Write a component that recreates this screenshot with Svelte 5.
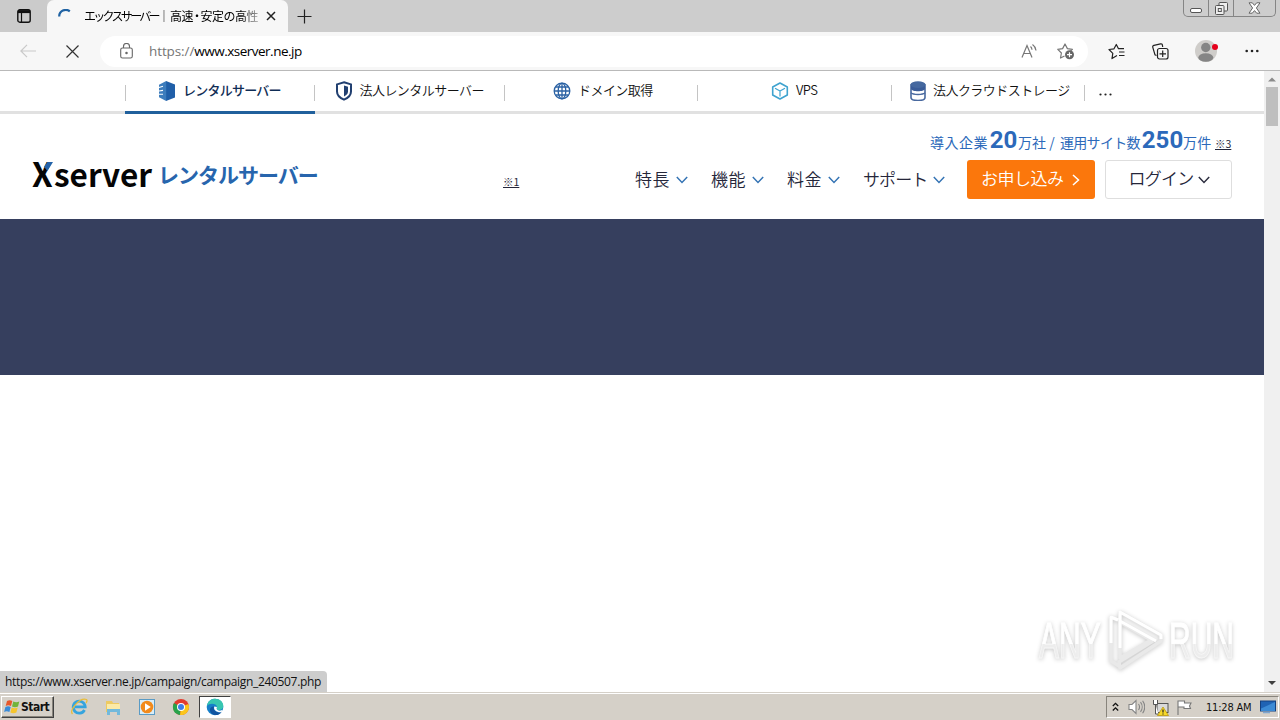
<script>
	const services = [
		{ id: 'rental', label: 'レンタルサーバー', width: 190, textWidth: 99, active: true },
		{ id: 'business', label: '法人レンタルサーバー', width: 190, textWidth: 124 },
		{ id: 'domain', label: 'ドメイン取得', width: 193, textWidth: 70 },
		{ id: 'vps', label: 'VPS', width: 194, textWidth: 21 },
		{ id: 'storage', label: '法人クラウドストレージ', width: 193, textWidth: 132 }
	];

	const menu = ['特長', '機能', '料金', 'サポート'];
</script>

{#snippet chevron(color)}
	<svg class="chevron" width="12" height="8" viewBox="0 0 12 8" fill="none" stroke={color} stroke-width="1.5"><polyline points="0.8 1 6 6.4 11.2 1"/></svg>
{/snippet}

{#snippet serviceIcon(id)}
	{#if id === 'rental'}
		<svg width="18" height="20" viewBox="0 0 18 20"><path d="M8 0l9 3.5v13L8 20z" fill="#205fa8"/><path d="M8.2 0L1 3.8v12.4L8.2 20z" fill="#3d7dbd"/><path d="M1 6.5l4-1.2M1 10l4-.6M1 13.3h4" stroke="#fff" stroke-width="1.1"/></svg>
	{:else if id === 'business'}
		<svg width="18" height="20" viewBox="0 0 18 20"><path d="M9 1.2l7 2.2v7c0 4-3.4 6.7-7 8.3-3.6-1.6-7-4.3-7-8.3v-7z" fill="#fff" stroke="#213f70" stroke-width="2"/><path d="M9 4.5l4 1.3v5c0 2-2 3.7-4 4.8z" fill="#213f70"/></svg>
	{:else if id === 'domain'}
		<svg width="18" height="18" viewBox="0 0 18 18" fill="none" stroke="#2b62a4" stroke-width="1.3"><circle cx="9" cy="9" r="7.8"/><ellipse cx="9" cy="9" rx="3.8" ry="7.8"/><path d="M9 1v16M1 9h16M2.5 5h13M2.5 13h13"/></svg>
	{:else if id === 'vps'}
		<svg width="18" height="18" viewBox="0 0 18 18" fill="none" stroke="#3fa3cf" stroke-width="1.6" stroke-linejoin="round"><path d="M9 1l7.300 4v8L9 17l-7.300-4V5z"/><path d="M4 6.300L9 9l5-2.700M9 9v5.500" stroke-width="1.2"/></svg>
	{:else}
		<svg width="16" height="20" viewBox="0 0 16 20"><path d="M1 4v12.500c0 4 14 4 14 0V4z" fill="#fff" stroke="#49699f" stroke-width="1.6"/><path d="M1 4v4c1 3 13 3 14 0V4z" fill="#3a5c98"/><ellipse cx="8" cy="3.6" rx="7.5" ry="3.3" fill="#45689f"/><path d="M1 11.800c2 2.300 12 2.300 14 0" fill="none" stroke="#49699f" stroke-width="1.5"/></svg>
	{/if}
{/snippet}

<div class="screen">
	<div class="tabstrip">
		<button class="tab-menu" aria-label="Tab actions">
			<svg width="14" height="14" viewBox="0 0 14 14" fill="none" stroke="#111"><rect x=".8" y=".8" width="12.4" height="12.4" rx="2" stroke-width="1.4"/><path d="M1 2.600h12" stroke-width="3"/><path d="M4.500 4v9" stroke-width="1.2"/></svg>
		</button>
		<div class="tab">
			<svg class="spinner" width="14" height="14" viewBox="0 0 14 14" fill="none" stroke="#1f62a3" stroke-width="2.2"><path d="M1.200 7.500A6.500 6.500 0 0 1 11.800 2.400"/></svg>
			<span class="tab-title"><span class="kana">エックスサーバー</span><span>｜</span><span class="kanji">高速<span class="dot">・</span>安定の高性</span></span>
			<svg width="10" height="10" viewBox="0 0 10 10" stroke="#222" stroke-width="1.5"><path d="M1 1l8 8M9 1l-8 8"/></svg>
		</div>
		<button class="new-tab" aria-label="New tab">
			<svg width="15" height="15" viewBox="0 0 15 15" stroke="#222" stroke-width="1.2"><path d="M7.500 .5v14M.5 7.500h14"/></svg>
		</button>
		<div class="window-buttons">
			<span class="wb">
				<svg width="12" height="5" viewBox="0 0 12 5"><rect x=".5" y=".5" width="11" height="4" rx="1.5" fill="#fff" stroke="#555"/></svg>
			</span>
			<span class="wb">
				<svg width="13" height="13" viewBox="0 0 13 13" fill="#eee" stroke="#555"><rect x="4" y=".5" width="8.5" height="8.5" rx="1"/><rect x=".5" y="3.5" width="8.5" height="9" rx="1"/><rect x="3.3" y="6.5" width="3" height="3"/></svg>
			</span>
			<span class="wb wide">
				<svg width="13" height="12" viewBox="0 0 13 12" fill="#fff" stroke="#666"><path d="M1 .8h3.300l2.200 2.600L8.700 .8H12L8.400 6l3.600 5.200H8.700L6.500 8.600l-2.200 2.600H1L4.600 6z"/></svg>
			</span>
		</div>
	</div>

	<div class="toolbar">
		<svg class="back" width="16" height="14" viewBox="0 0 16 14" fill="none" stroke="#c9c9c9" stroke-width="1.2"><path d="M7 .8L.9 7 7 13.200M1 7h15"/></svg>
		<svg class="stop" width="13" height="13" viewBox="0 0 13 13" stroke="#333" stroke-width="1.2"><path d="M.5 .5l12 12M12.500 .5l-12 12"/></svg>
		<div class="address">
			<svg width="13" height="16" viewBox="0 0 13 16" fill="none" stroke="#666" stroke-width="1.1"><rect x=".7" y="5" width="11.6" height="10" rx="1.8"/><path d="M3.500 5V3.500a3 3 0 0 1 6 0V5"/><circle cx="6.5" cy="10" r=".7" fill="#555"/></svg>
			<span class="url"><span class="scheme">https://</span>www.xserver.ne.jp</span>
			<svg class="read" width="17" height="16" viewBox="0 0 17 16" fill="none" stroke="#777" stroke-width="1.2"><path d="M1 14.500L6 2.500l5 12M2.800 10.500h6.500M9.500 3.500c1 .8 1.400 2 1.500 3.300M11.500 1.500c2 1.400 3.200 3.500 3.500 6"/></svg>
			<svg class="fav" width="18" height="18" viewBox="0 0 18 18" fill="none" stroke="#777" stroke-width="1.2" stroke-linejoin="round"><path d="M7.500 14L3.500 16l.9-5L.8 7.300l4.800-.7L8 2l2.400 4.600 5 .7-1.900 1.800"/><circle cx="12.5" cy="12.7" r="4.5" fill="#666" stroke="none"/><path d="M12.500 10.200v5M10 12.700h5" stroke="#fff"/></svg>
		</div>
		<svg class="favorites" width="17" height="17" viewBox="0 0 17 17" fill="none" stroke="#222" stroke-width="1.2" stroke-linejoin="round"><path d="M9 12.500L4 15.600l.8-5.300L1 6.500l5-.7L8.300 1.500l2.200 4.200h5.500M11 9h5.500M11 12.500h5.500"/></svg>
		<svg class="collections" width="17" height="17" viewBox="0 0 17 17" fill="none" stroke="#222" stroke-width="1.2"><path d="M4.500 12.500L3 11.800 .8 4.300c-.3-1 .2-1.800 1.200-2L8.500 .9c1-.2 1.700.3 1.900 1.300l.3 1.800"/><rect x="5.5" y="5.5" width="10.5" height="10.5" rx="2"/><path d="M10.700 7.500v6.500M7.500 10.800h6.500"/></svg>
		<svg class="profile" width="24" height="24" viewBox="0 0 24 24"><circle cx="11" cy="12" r="11" fill="#cfcdca"/><circle cx="10.8" cy="8.5" r="4.7" fill="#858585"/><ellipse cx="10.8" cy="18.5" rx="7.5" ry="4.3" fill="#858585"/><circle cx="20" cy="8" r="3" fill="#e5001c"/></svg>
		<svg class="more" width="14" height="4" viewBox="0 0 14 4" fill="#222"><circle cx="1.7" cy="2" r="1.3"/><circle cx="7" cy="2" r="1.3"/><circle cx="12.3" cy="2" r="1.3"/></svg>
	</div>

	<div class="viewport">
		<main class="page">
			<nav class="services">
				{#each services as s}
					<a href="#{s.id}" class="service" class:active={s.active} style="width: {s.width}px">
						{@render serviceIcon(s.id)}
						<span class="service-label" style="width: {s.textWidth}px">{s.label}</span>
					</a>
				{/each}
				<span class="service-more">
					<svg width="13" height="3" viewBox="0 0 13 3" fill="#222"><circle cx="1.5" cy="1.5" r="1.1"/><circle cx="6.5" cy="1.5" r="1.1"/><circle cx="11.5" cy="1.5" r="1.1"/></svg>
				</span>
			</nav>

			<header class="header">
				<div class="logo">
					<span class="logo-x">X<svg width="11" height="9" viewBox="0 0 11 9"><path d="M5.300 0H11L5.400 9 2 4.800z" fill="#2563a9"/></svg></span><span class="logo-name">server</span>
					<span class="logo-sub">レンタルサーバー</span>
				</div>
				<span class="note note-1">※1</span>
				<div class="header-right">
					<div class="stats">
						<span class="stat-a">導入企業</span><b>20</b><span class="stat-b">万社 /</span><span class="stat-c">運用サイト数</span><b class="big">250</b><span class="stat-d">万件</span><span class="note">※3</span>
					</div>
					<div class="actions">
						{#each menu as item}
							<a href="#menu" class="menu-item" class:long={item.length > 2}><span>{item}</span>{@render chevron('#3473b4')}</a>
						{/each}
						<button class="apply">
							<span>お申し込み</span>
							<svg width="8" height="12" viewBox="0 0 8 12" fill="none" stroke="#fff" stroke-width="1.5"><polyline points="1 1 6.500 6 1 11"/></svg>
						</button>
						<button class="login"><span>ログイン</span>{@render chevron('#2c2d3f')}</button>
					</div>
				</div>
			</header>

			<div class="hero"></div>
		</main>

		<div class="scrollbar">
			<svg width="16" height="15" viewBox="0 0 16 15"><path d="M4 10.500L8 6.500l4 4z" fill="#8b8b8b"/></svg>
			<div class="thumb"></div>
			<svg class="down" width="16" height="17" viewBox="0 0 16 17"><path d="M4 6l4 4 4-4z" fill="#404040"/></svg>
		</div>

		<div class="status">https://www.xserver.ne.jp/campaign/campaign_240507.php</div>

		<div class="watermark">
			<span class="wm-any">ANY</span>
			<svg width="60" height="66" viewBox="0 0 60 66" fill="none" stroke-linejoin="round"><path d="M13 12L6 9v44l8 5M15 4l41 23v6L15 60l-1-6 34-21M15 4v46l31-18L15 14" stroke="#e9e9e9" stroke-width="3.5"/><path d="M13 12L6 9v26M15 40V4l41 23v4M15 13l36 20" stroke="#fff" stroke-width="3"/></svg>
			<span class="wm-run">RUN</span>
		</div>
	</div>

	<div class="taskbar">
		<button class="start">
			<svg width="17" height="16" viewBox="0 0 17 16"><path d="M3 2c2-1 3.500-1 5.300 0L7 7c-2-1-3.500-1-5.300 0z" fill="#e8582a"/><path d="M9.300 2.500c2 1 4 1 6 0L14 7.600c-2 1-4 1-6 0z" fill="#72b43a"/><path d="M1.400 8c2-1 3.500-1 5.300 0l-1.300 5c-2-1-3.500-1-5.300 0z" fill="#3a8bd8"/><path d="M7.700 8.600c2 1 4 1 6 0l-1.300 5c-2 1-4 1-6 0z" fill="#f6c52e"/></svg>
			<span>Start</span>
		</button>
		<div class="quick">
			<svg width="18" height="18" viewBox="0 0 18 18" fill="none"><path d="M14.500 12a6 6 0 1 1 .7-3.200H5" stroke="#35a4de" stroke-width="2.8"/><path d="M2.500 16C-1 12 10-1 16.500 1.500c1 .8.300 2.500-.5 3.500" stroke="#e9bd38" stroke-width="1.3"/></svg>
			<svg width="18" height="18" viewBox="0 0 18 18"><path d="M2 3h6l1 2h6v9H2z" fill="#edca62"/><path d="M3 6h13v6H3z" fill="#fbeaa7"/><path d="M3 11h13v6h-3v-3H6v3H3z" fill="#72b9dc"/></svg>
			<svg width="18" height="18" viewBox="0 0 18 18"><rect x="1.5" y="1.5" width="15" height="15" fill="#d9edf8" stroke="#5a9bc5"/><circle cx="9" cy="9" r="6.3" fill="#f28a1b"/><path d="M7 5.200v7.600L12.800 9z" fill="#fff"/></svg>
			<svg width="18" height="18" viewBox="0 0 18 18"><circle cx="9" cy="9" r="8" fill="#e33b2e"/><path d="M9 9L2 5a8 8 0 0 0 6 12z" fill="#28a34b"/><path d="M9 9l7.400-3A8 8 0 0 1 8 17z" fill="#fbc61b"/><circle cx="9" cy="9" r="4" fill="#fff"/><circle cx="9" cy="9" r="3" fill="#3f7ee8"/></svg>
		</div>
		<div class="task-active">
			<svg width="18" height="18" viewBox="0 0 18 18"><circle cx="9" cy="9" r="8.3" fill="#167fc9"/><path d="M.8 8C2 3 5 .7 9 .7c5 0 8.300 3.300 8.300 7 0 3-2.300 4.300-4.500 4.300-3 0-1.600-1.500-1.800-3C10.500 5.500 4 4.500.8 8z" fill="#38c6b0"/><path d="M8 8.500c-1 3 1 6.500 7.500 5.700-4 4.800-11 3-11.500-2C3.800 9.500 6 8 8 8.500z" fill="#1254a0"/><path d="M11 9c-.5 1.200-1 2.500 1.500 3.500 1.500.4 3.300 0 4.300-.7l-1.300 2.400C11 14.800 7 12 8.300 8.500z" fill="#fff"/></svg>
		</div>
		<div class="tray">
			<svg class="tray-up" width="7" height="10" viewBox="0 0 7 10" fill="none" stroke="#111" stroke-width="1.3"><path d="M.8 4l2.700-2.700L6.200 4M.8 8.500l2.700-2.700 2.700 2.700"/></svg>
			<svg width="17" height="16" viewBox="0 0 17 16" fill="none" stroke="#858585" stroke-width="1.1"><path d="M1 5.500h3l4-4v13l-4-4H1z" fill="#fff"/><path d="M10.500 5c1.200 1.700 1.200 4.300 0 6M12.500 3.200c2.200 2.800 2.200 6.800 0 9.600M14.600 1.700c2.600 3.800 2.600 8.800 0 12.600"/></svg>
			<svg width="17" height="17" viewBox="0 0 17 17"><rect x="5" y="4.5" width="11" height="9" fill="#d9d9d9" stroke="#555"/><path d="M1.500 1v4.500h4V1M3.500 5.500V15h3" fill="#fff" stroke="#555"/><path d="M11 8l5.500 8.500h-11z" fill="#f7d92a" stroke="#b59000" stroke-width=".7"/><path d="M11 10.500v3M11 14.500v1" stroke="#222" stroke-width="1.2"/></svg>
			<svg width="17" height="17" viewBox="0 0 17 17" fill="#fff" stroke="#777" stroke-width="1.1"><path d="M2 1.500v14.500M2 2h6.500v2H15l-1.500 3 1 2.500H8V8H2z"/></svg>
			<span class="clock">11:28 AM</span>
			<svg width="16" height="14" viewBox="0 0 16 14"><rect x=".5" y="1" width="15" height="10" fill="#1f63b4" stroke="#14407e"/><path d="M1 8.500L15 2v9H1z" fill="#3c8bd5"/><path d="M3 12.500h7" stroke="#7ea6d0" stroke-width="1.5"/></svg>
		</div>
	</div>
</div>

<style>
	:global(body) { margin: 0; overflow: hidden; background: #fff; }

	.screen {
		width: 1280px; height: 720px; box-sizing: border-box;
		display: flex; flex-direction: column; overflow: hidden;
		font-family: "Open Sans", "Noto Sans CJK JP", sans-serif;
		color: #111;
	}
	.screen svg { flex: none; display: block; }
	button { border: none; background: none; padding: 0; margin: 0; font-family: inherit; color: inherit; }
	a { color: inherit; text-decoration: none; }

	.tabstrip { height: 32px; display: flex; background: #cdcdcd; flex: none; }
	.tab-menu { width: 47px; display: flex; align-items: center; padding-left: 17px; box-sizing: border-box; background: #cbcbcb; }
	.tab {
		width: 241px; box-sizing: border-box; padding: 0 12px 0 11px;
		display: flex; align-items: center; background: #f7f7f7;
		border-radius: 7px 7px 0 0;
	}
	.tab-title {
		width: 174px; margin: 0 8px 0 12px; display: flex; white-space: nowrap;
		font-size: 12px; color: #000;
		mask-image: linear-gradient(90deg, #000 90%, rgba(0, 0, 0, 0.35));
	}
	.kana { width: 74px; letter-spacing: -2.7px; }
	.kanji { letter-spacing: -0.5px; }
	.dot { margin: 0 -2px; }
	.new-tab { width: 32px; display: flex; align-items: center; justify-content: center; }
	.window-buttons {
		margin-left: auto; margin-right: 4px; height: 16px; display: flex;
		border: 1px solid #858585; border-top: none; border-radius: 0 0 5px 5px;
	}
	.wb { width: 24px; display: flex; align-items: center; justify-content: center; border-right: 1px solid #858585; }
	.wb:first-child svg { margin-top: 5px; }
	.wb.wide { width: 41px; border-right: none; }

	.toolbar {
		height: 39px; box-sizing: border-box; flex: none; display: flex; align-items: center;
		background: #f7f7f7; border-bottom: 1px solid #b9b9b9;
	}
	.back { margin-left: 20px; }
	.stop { margin-left: 30px; }
	.address {
		width: 988px; height: 31px; margin-left: 21px; padding: 0 13px 0 20px; box-sizing: border-box;
		display: flex; align-items: center; background: #fff; border-radius: 16px;
	}
	.url { margin-left: 16px; font-size: 13.5px; letter-spacing: -0.5px; color: #000; }
	.scheme { color: #757575; letter-spacing: -0.1px; }
	.read { margin-left: auto; }
	.fav { margin-left: 19px; }
	.favorites { margin-left: 20px; }
	.collections { margin-left: 27px; }
	.profile { margin-left: 26px; }
	.more { margin-left: 26px; }

	.viewport { position: relative; flex: 1; display: flex; min-height: 0; }
	.page { width: 1264px; background: #fff; font-family: "Noto Sans CJK JP", sans-serif; }

	.services { height: 43px; box-sizing: border-box; display: flex; padding-left: 125px; border-bottom: 3px solid #e1e1e1; }
	.service {
		height: 43px; box-sizing: border-box; padding-bottom: 3px; flex: none;
		display: flex; align-items: center; justify-content: center; gap: 7px;
		font-size: 13px; font-weight: 350; letter-spacing: -0.55px; color: #111;
		background: linear-gradient(#c4c4c4, #c4c4c4) 0 14px / 1px 16px no-repeat;
	}
	.service-label { white-space: nowrap; line-height: 20px; padding-bottom: 3px; }
	.service.active { margin-right: -1px; font-weight: 500; letter-spacing: -0.75px; color: #0f2d55; border-bottom: 3px solid #20609c; padding-bottom: 0; }
	.service-more {
		padding: 22px 0 0 15px;
		background: linear-gradient(#c4c4c4, #c4c4c4) 0 14px / 1px 16px no-repeat;
	}

	.header { height: 105px; box-sizing: border-box; display: flex; padding: 0 32px; }
	.logo { width: 471px; height: 60px; margin-top: 30px; display: flex; align-items: center; white-space: nowrap; }
	.logo-x, .logo-name { font-weight: 700; line-height: 58px; padding-bottom: 2px; color: #050505; }
	.logo-x { position: relative; width: 22px; font-size: 33px; }
	.logo-x svg { position: absolute; left: 10px; top: 18px; }
	.logo-name { width: 99px; font-size: 31.5px; }
	.logo-sub { margin-left: 5px; font-size: 21px; font-weight: 700; letter-spacing: -1px; color: #2765ad; }

	.note { font-size: 10.5px; line-height: 11px; text-decoration: underline; color: #25263a; white-space: nowrap; }
	.note-1 { margin-top: 62px; }
	.header-right { margin-left: auto; display: flex; flex-direction: column; align-items: flex-end; }
	.stats { height: 26px; margin-top: 12px; display: flex; align-items: baseline; white-space: nowrap; font-size: 14px; line-height: 26px; color: #2c69ba; }
	.stats b { width: 29px; font-family: Roboto, sans-serif; font-size: 24px; line-height: 28px; text-align: center; }
	.stats b.big { width: 43px; padding-left: 1px; margin-right: -1px; }
	.stat-a { width: 59px; letter-spacing: 0.5px; }
	.stat-b { width: 42px; }
	.stat-c { width: 80px; letter-spacing: -0.7px; }
	.stat-d { width: 32px; letter-spacing: 0.3px; }
	.stats .note { width: 17px; }

	.actions { margin-top: 8px; height: 39px; display: flex; align-items: center; }
	.menu-item { display: flex; align-items: center; margin-right: 23px; font-size: 17px; font-weight: 350; color: #25263a; }
	.menu-item span { width: 35px; line-height: 24px; padding-bottom: 2px; white-space: nowrap; margin-right: 6px; letter-spacing: 0.4px; }
	.menu-item.long { margin-right: 22px; }
	.menu-item.long span { width: 64px; letter-spacing: -0.9px; }
	.apply, .login { height: 39px; box-sizing: border-box; display: flex; align-items: center; font-size: 17px; font-weight: 350; line-height: 24px; border-radius: 3px; }
	.apply { width: 128px; padding-left: 14px; background: #fb770c; color: #fff; margin-right: 10px; }
	.apply span { width: 82px; padding-bottom: 3px; margin-right: 9px; letter-spacing: -0.5px; white-space: nowrap; }
	.login { width: 127px; padding-left: 22px; border: 1px solid #dedede; color: #25263a; }
	.login span { width: 66px; padding-bottom: 3px; margin-right: 4px; letter-spacing: -0.8px; white-space: nowrap; }

	.hero { height: 156px; background: #363f5e; }

	.scrollbar { width: 16px; background: #f0f0f0; display: flex; flex-direction: column; align-items: center; }
	.thumb { width: 12px; height: 39px; margin-top: 1px; background: #bfbfbf; }
	.down { margin-top: auto; }

	.status {
		position: absolute; left: 0; bottom: 0; width: 327px; height: 21px; box-sizing: border-box;
		padding-left: 5px; background: #cdcdcd; border-radius: 0 4px 0 0;
		font-size: 12px; line-height: 21px; letter-spacing: -0.32px; white-space: nowrap; color: #111;
	}

	.watermark {
		position: absolute; left: 1039px; top: 537px; display: flex; align-items: center;
		font-family: "Liberation Sans", sans-serif; font-size: 50px; line-height: 66px; color: #fff;
		filter: drop-shadow(0 1px 2px rgba(0, 0, 0, 0.22));
	}
	.watermark span {
		display: block; width: 110px; transform-origin: 0 50%; transform: scaleX(0.6); white-space: nowrap;
		background: linear-gradient(#fff 54%, #ededed 54%); background-clip: text; color: transparent;
		-webkit-text-stroke: 1px rgba(255, 255, 255, 0.5);
	}
	.wm-any { margin-right: -44px; }
	.wm-run { margin: 0 -44px 0 4px; }

	.taskbar { height: 28px; box-sizing: border-box; flex: none; display: flex; align-items: center; background: #d5d0c8; border-top: 1px solid #d5d0c8; box-shadow: inset 0 1px #fff; }
	.start {
		width: 53px; height: 22px; margin: 1px 0 0 1px; padding-left: 2px; box-sizing: border-box; display: flex; align-items: center;
		border: 1px solid; border-color: #fff #404040 #404040 #fff; box-shadow: inset -1px -1px #88847c;
		font-family: "DejaVu Sans Condensed", "DejaVu Sans", sans-serif; font-size: 12px; font-weight: 700; letter-spacing: -0.5px;
	}
	.quick { display: flex; gap: 16px; margin: 1px 0 0 16px; }
	.task-active {
		width: 32px; height: 22px; box-sizing: border-box; margin: 1px 0 0 9px; display: flex; align-items: center; justify-content: center;
		background: #fff; border: 1px solid; border-color: #404040 #fff #fff #404040;
	}
	.tray {
		width: 173px; height: 22px; box-sizing: border-box; margin: 1px 1px 0 auto; padding-left: 5px;
		display: flex; align-items: center; gap: 7px;
		border: 1px solid; border-color: #88847c #fff #fff #88847c;
	}
	.tray-up { margin-right: 2px; }
	.clock { width: 46px; margin: 0 1px 0 6px; font-family: "DejaVu Sans Condensed", "DejaVu Sans", sans-serif; font-size: 11px; letter-spacing: -0.2px; white-space: nowrap; }
</style>
